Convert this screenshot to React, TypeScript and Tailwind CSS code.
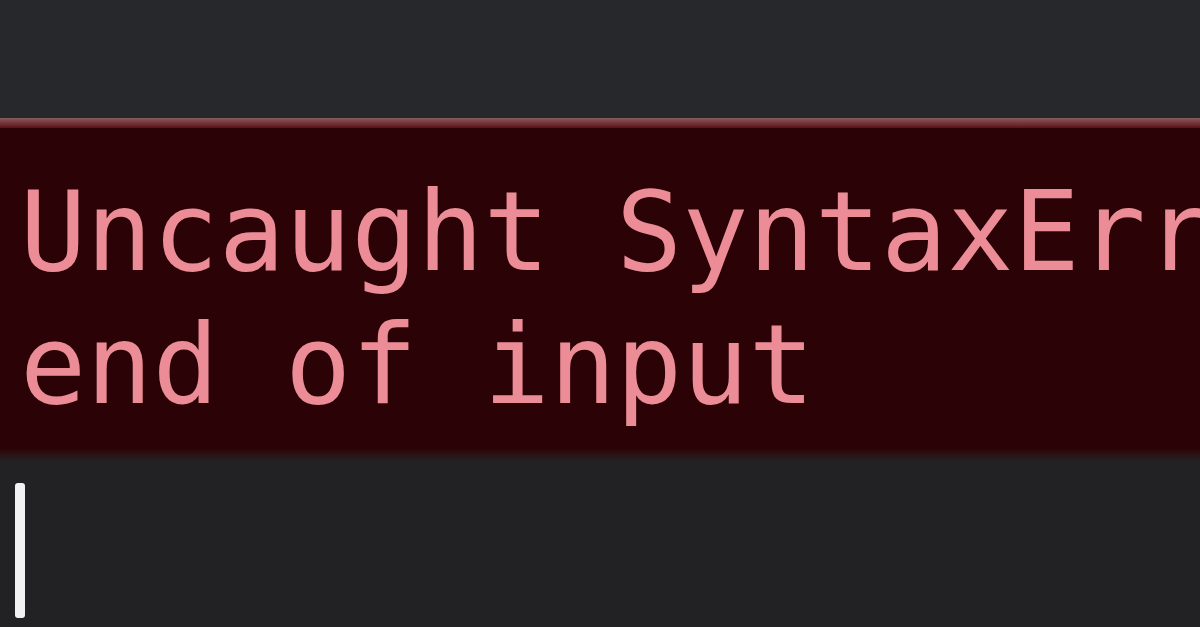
export default function App() {
  return (
    <div className="w-[1200px] h-[627px] overflow-hidden bg-[#222224] flex flex-col" style={{ fontFamily: '"DejaVu Sans Mono", monospace' }}>
      <div className="h-[118px] bg-[#26282b] shrink-0" />
      <div className="h-[10px] bg-gradient-to-b from-[#8a5a5e] to-[#5a0f18] shrink-0" />
      <div className="bg-[#2b0206] pt-[38px] pb-[16px] pl-[20px] overflow-hidden shrink-0">
        <div className="text-[110px] leading-[133px] text-[#ec8c97] whitespace-pre">
          <div>Uncaught SyntaxError: Unexpected</div>
          <div>end of input</div>
        </div>
      </div>
      <div className="h-[14px] bg-gradient-to-b from-[#2b0206] to-[#222224] shrink-0" />
      <div className="pl-[15px] pt-[21px]">
        <div className="w-[10px] h-[135px] bg-[#f2f2f2] rounded-[3px]" />
      </div>
    </div>
  );
}
